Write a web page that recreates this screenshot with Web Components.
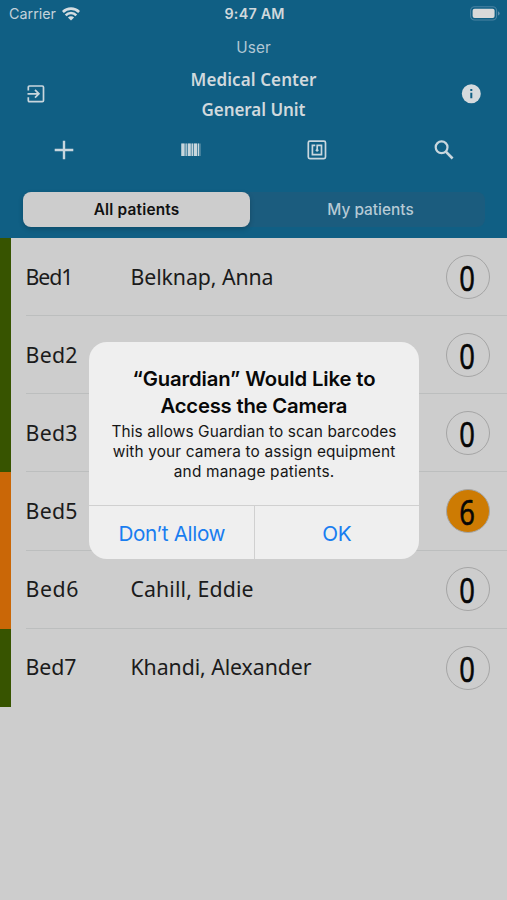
<!DOCTYPE html>
<html lang="en">
<head>
<meta charset="utf-8">
<title>Guardian</title>
<style>
html,body{margin:0;height:100%;overflow:hidden;background:#cdcdcd}
</style>
</head>
<body>
<guardian-screen></guardian-screen>
<script>
const define=(name,html,setup)=>customElements.define(name,class extends HTMLElement{
  connectedCallback(){
    if(this.shadowRoot)return;
    const t=document.createElement('template');
    t.innerHTML=html;
    this.attachShadow({mode:'open'}).append(t.content.cloneNode(true));
    if(setup)setup(this,this.shadowRoot);
  }
});

/* One line of text, tracked so that it spans the width given in "span". */
define('tracked-text',`<style>:host{display:block;white-space:nowrap;width:max-content}span{display:inline-block;margin-right:var(--trim,0)}</style><span><slot></slot></span>`,(el,root)=>{
  const s=root.querySelector('span'),n=el.textContent.length,w=s.getBoundingClientRect().width;
  if(n<2)return;
  const ls=(parseFloat(el.getAttribute('span'))-w)/(n-1);
  s.style.letterSpacing=ls+'px';
  s.style.setProperty('--trim',-ls+'px');
});

define('status-bar',`<style>
:host{display:grid;grid-template-columns:1fr auto 1fr;align-items:center;height:27.6px;padding:0 7px 0 9px;font:400 14.3px/20px Inter,sans-serif;color:#c3d2da}
.l,.r{display:flex;align-items:center}.l{gap:6px}.r{justify-content:flex-end}
.t{font-weight:600;color:#d0d8dc}svg{display:block}
</style>
<div class="l"><tracked-text span="47">Carrier</tracked-text>
<svg width="18" height="14" viewBox="0 0 18 14" fill="none" stroke="#d5dde1" stroke-width="2.6"><path d="M.9 5a11.400 11.400 0 0 1 16.200 0M3.700 8.300a7.400 7.400 0 0 1 10.600 0"/><path d="M9 13.600 5.900 10.500a4.400 4.400 0 0 1 6.200 0z" fill="#d5dde1" stroke="none"/></svg></div>
<tracked-text class="t" span="60">9:47 AM</tracked-text>
<div class="r"><svg width="30" height="15" viewBox="0 0 30 15"><rect x=".6" y=".8" width="26" height="13.2" rx="4" fill="none" stroke="#4a83a2" stroke-width="1.1"/><rect x="2.6" y="2.8" width="22" height="9.2" rx="2" fill="#d9d9d9"/><path d="M28 5.200q1.700.7 1.700 2.200T28 9.600z" fill="#5f91ad"/></svg></div>`);

define('title-bar',`<style>
:host{display:grid;grid-template-columns:72px 1fr 72px;height:97px;color:#d0d9dd}
.side{display:flex;align-items:center;justify-content:center;padding-top:35px}
.mid{display:flex;flex-direction:column;align-items:center}
.user{font:400 15.3px/39px Inter,sans-serif;color:#b2c8d4}
.name{font:600 17px/30.300px "Noto Sans",sans-serif}
.names{margin-top:-2px;display:flex;flex-direction:column;align-items:center}
svg{display:block}
</style>
<div class="side"><svg width="20" height="20" viewBox="0 0 20 20" fill="none" stroke="#c9d6dd" stroke-width="1.7"><path d="M2.300 6.400V3.200q0-1.200 1.200-1.200H16.300q1.200 0 1.200 1.200v13.200q0 1.200-1.200 1.200H3.500q-1.200 0-1.200-1.200V13.200M1.500 9.800h11.300M9 5.900l3.900 3.900-3.900 3.900"/></svg></div>
<div class="mid"><tracked-text class="user" span="34.500">User</tracked-text><div class="names"><tracked-text class="name" span="126">Medical Center</tracked-text><tracked-text class="name" span="104">General Unit</tracked-text></div></div>
<div class="side"><svg width="20" height="20" viewBox="0 0 20 20"><circle cx="10.300" cy="9.700" r="9.500" fill="#d5dadd"/><path d="M9.300 8.700h2v5.500h-2zM9.300 5h2v2h-2z" fill="#105f84"/></svg></div>`);

define('action-bar',`<style>
:host{display:grid;grid-template-columns:repeat(4,1fr);justify-items:center;align-items:center;height:51px;padding-left:1px}
svg{display:block}
</style>
<svg width="20" height="20" viewBox="0 0 20 20" stroke="#c9d7de" stroke-width="2.400"><path d="M10 .7v18.600M.7 10h18.600"/></svg>
<svg width="20" height="14" viewBox="0 0 20 14" fill="#c9d7de"><path d="M.3.500h3.200v12.500H.3zM4.700.500h1v12.500h-1zM7 .500h2.700v12.500H7zM10.700.500h1.300v12.500h-1.300zM13 .500h3v12.500h-3zM17 .500h1v12.500h-1z"/><path d="M.3.500h19.500v12.500H.3z" opacity=".35"/></svg>
<svg width="20" height="20" viewBox="0 0 20 20" fill="none" stroke="#c9d7de" stroke-width="1.700"><rect x="1.300" y="1.200" width="17.200" height="17.400" rx="1.500"/><path d="M8.300 5.300H5.400v9.300h9.100V5.300H10.200v4.800"/><circle cx="10.100" cy="10.300" r="1.400" fill="#c9d7de" stroke="none"/></svg>
<svg width="20" height="20" viewBox="0 0 20 20" fill="none" stroke="#c9d7de" stroke-width="2.200"><circle cx="7.600" cy="7.300" r="5.900"/><path d="M11.800 11.600l6.800 6.900" stroke-width="2.600"/></svg>`);

define('segment-control',`<style>
:host{display:grid;grid-template-columns:227px 1fr;height:34.500px;margin:16.700px 22px 0 23px;border-radius:8px;background:#1b5c7e;font:500 15.400px/32.500px Inter,sans-serif}
div{display:flex;justify-content:center;padding-top:2px}
.on{background:#cdcdcd;color:#111;font-weight:600;border-radius:8px;box-shadow:0 2px 5px #0003}
.off{color:#b6cad5;padding-left:6px}
</style><div class="on"><tracked-text span="85.500">All patients</tracked-text></div><div class="off"><tracked-text span="86.500">My patients</tracked-text></div>`);

define('patient-row',`<style>
:host{display:flex;height:78.150px;color:#1b1b1b;font:400 21.300px/76.500px "Noto Sans",sans-serif}
.bar{width:11px;background:var(--level,#375400)}
.body{flex:1;display:grid;grid-template-columns:105px 1fr 61.500px;align-items:center;margin-left:14.500px;padding-top:.5px;border-bottom:1px solid var(--rule,#bcbebe)}
.score{box-sizing:border-box;width:44px;height:44px;border:1px solid #a5a5a5;border-radius:50%;background:var(--score,transparent);display:grid;place-items:center;font:400 35.500px/40px "Open Sans","Noto Sans",sans-serif;-webkit-text-stroke:.7px #060606;color:#060606}
.score span{transform:translateY(-.3px) scaleX(.77)}
</style><div class="bar"></div><div class="body"><slot name="bed"></slot><slot name="name"></slot><div class="score"><span><slot name="score"></slot></span></div></div>`);

define('permission-alert',`<style>
:host{position:absolute;left:89px;top:342px;width:330px;height:217px;box-sizing:border-box;border-radius:18px;background:#efefef;color:#080808;font-family:Inter,sans-serif;display:flex;flex-direction:column;overflow:hidden}
.copy{flex:none;height:163px;display:flex;flex-direction:column;align-items:center;padding-top:24px;box-sizing:border-box}
.h{font:600 20.300px/26.700px Inter,sans-serif}
.m{font:400 15.400px/19.600px Inter,sans-serif;color:#161616}
.first{margin-top:3px}
.actions{flex:1;display:grid;grid-template-columns:165px 1fr;border-top:1px solid #d0d0d0;color:#187df0;font:400 20.700px/51px Inter,sans-serif}
.actions div{display:flex;justify-content:center;padding:2px 0 0 1px}
.actions div+div{border-left:1px solid #d0d0d0;padding-left:0}
</style>
<div class="copy"><tracked-text class="h" span="243">“Guardian” Would Like to</tracked-text><tracked-text class="h" span="187">Access the Camera</tracked-text>
<tracked-text class="m first" span="285">This allows Guardian to scan barcodes</tracked-text><tracked-text class="m" span="282.500">with your camera to assign equipment</tracked-text><tracked-text class="m" span="160.500">and manage patients.</tracked-text></div>
<div class="actions"><div><tracked-text span="107">Don’t Allow</tracked-text></div><div><tracked-text span="29.500">OK</tracked-text></div></div>`);

const row=(bed,bw,name,nw,score,style='')=>`<patient-row style="${style}"><tracked-text slot="bed" span="${bw}">${bed}</tracked-text><tracked-text slot="name" span="${nw}">${name}</tracked-text><span slot="score">${score}</span></patient-row>`;
const orange='--level:#ca6707;';
define('guardian-screen',`<style>
:host{display:block;position:relative;width:507px;height:900px;background:#cdcdcd;overflow:hidden}
header{height:238px;background:#105f84;overflow:hidden}
main{display:flex;flex-direction:column}
</style>
<header><status-bar></status-bar><title-bar></title-bar><action-bar></action-bar><segment-control></segment-control></header>
<main>
${row('Bed1',48,'Belknap, Anna',143,0)}
${row('Bed2',52,'',0,0)}
${row('Bed3',52,'',0,0)}
${row('Bed5',52,'',0,6,orange+'--score:#cd7b03')}
${row('Bed6',53,'Cahill, Eddie',123,0,orange)}
${row('Bed7',51,'Khandi, Alexander',181,0,'--rule:transparent')}
</main>
<permission-alert></permission-alert>`);
</script>
</body>
</html>
